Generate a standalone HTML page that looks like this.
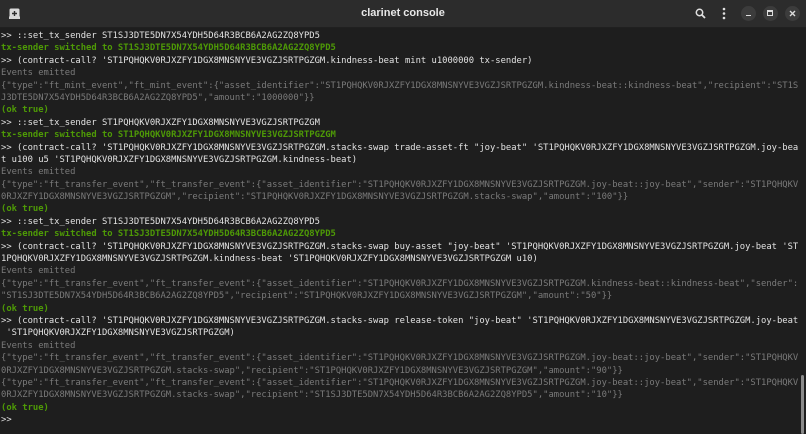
<!DOCTYPE html>
<html><head><meta charset="utf-8"><style>
html,body{margin:0;padding:0;width:806px;height:434px;overflow:hidden;background:#1e1e1e;}
.hdr{position:absolute;left:0;top:0;width:806px;height:27px;background:#2c2c2c;border-bottom:1px solid #202020;}
.title{position:absolute;left:0;width:806px;top:7px;text-align:center;color:#e8e8e8;font:bold 11px "Liberation Sans",sans-serif;}
.cb{position:absolute;top:6px;width:15px;height:15px;border-radius:50%;background:#3c3c3c;}
pre{position:absolute;left:1px;top:30px;margin:0;font-family:"DejaVu Sans Mono","Liberation Mono",monospace;font-size:8.84px;line-height:12.39px;color:#e2e2e2;white-space:pre;}
.g{color:#4e9a06;font-weight:bold;}
.m{color:#7a7a7a;}
.sb{position:absolute;left:801px;top:375px;width:3px;height:59px;background:#8a8a8a;border-radius:2px;}
</style></head><body>
<div class="hdr">
<svg style="position:absolute;left:9px;top:8px" width="11" height="11" viewBox="0 0 11 11"><rect x="0.5" y="0.5" width="10" height="10" rx="1.5" fill="#d8d8d8"/><path d="M5.5 3v5M3 5.5h5" stroke="#2c2c2c" stroke-width="1.4"/><rect x="0" y="8.5" width="11" height="2.5" fill="#d8d8d8"/></svg>
<div class="title">clarinet console</div>
<svg style="position:absolute;left:695px;top:8px" width="11" height="11" viewBox="0 0 11 11"><circle cx="4.5" cy="4.5" r="3.2" fill="none" stroke="#e0e0e0" stroke-width="1.5"/><path d="M7 7l3 3" stroke="#e0e0e0" stroke-width="1.8"/></svg>
<svg style="position:absolute;left:722px;top:7px" width="4" height="13"><circle cx="2" cy="2" r="1.3" fill="#e0e0e0"/><circle cx="2" cy="6.5" r="1.3" fill="#e0e0e0"/><circle cx="2" cy="11" r="1.3" fill="#e0e0e0"/></svg>
<div class="cb" style="left:741px"></div><div style="position:absolute;left:746px;top:15px;width:5px;height:1.3px;background:#ddd"></div>
<div class="cb" style="left:763px"></div><div style="position:absolute;left:767px;top:10px;border:1px solid #ddd;border-top-width:2px;box-sizing:content-box;width:4px;height:3px"></div>
<div class="cb" style="left:785px"></div><svg style="position:absolute;left:789px;top:10px" width="7" height="7"><path d="M1 1l5 5M6 1l-5 5" stroke="#ddd" stroke-width="1.4"/></svg>
</div>
<pre>&gt;&gt; ::set_tx_sender ST1SJ3DTE5DN7X54YDH5D64R3BCB6A2AG2ZQ8YPD5
<span class="g">tx-sender switched to ST1SJ3DTE5DN7X54YDH5D64R3BCB6A2AG2ZQ8YPD5</span>
&gt;&gt; (contract-call? 'ST1PQHQKV0RJXZFY1DGX8MNSNYVE3VGZJSRTPGZGM.kindness-beat mint u1000000 tx-sender)
<span class="m">Events emitted</span>
<span class="m">{"type":"ft_mint_event","ft_mint_event":{"asset_identifier":"ST1PQHQKV0RJXZFY1DGX8MNSNYVE3VGZJSRTPGZGM.kindness-beat::kindness-beat","recipient":"ST1S</span>
<span class="m">J3DTE5DN7X54YDH5D64R3BCB6A2AG2ZQ8YPD5","amount":"1000000"}}</span>
<span class="g">(ok true)</span>
&gt;&gt; ::set_tx_sender ST1PQHQKV0RJXZFY1DGX8MNSNYVE3VGZJSRTPGZGM
<span class="g">tx-sender switched to ST1PQHQKV0RJXZFY1DGX8MNSNYVE3VGZJSRTPGZGM</span>
&gt;&gt; (contract-call? 'ST1PQHQKV0RJXZFY1DGX8MNSNYVE3VGZJSRTPGZGM.stacks-swap trade-asset-ft "joy-beat" 'ST1PQHQKV0RJXZFY1DGX8MNSNYVE3VGZJSRTPGZGM.joy-bea
t u100 u5 'ST1PQHQKV0RJXZFY1DGX8MNSNYVE3VGZJSRTPGZGM.kindness-beat)
<span class="m">Events emitted</span>
<span class="m">{"type":"ft_transfer_event","ft_transfer_event":{"asset_identifier":"ST1PQHQKV0RJXZFY1DGX8MNSNYVE3VGZJSRTPGZGM.joy-beat::joy-beat","sender":"ST1PQHQKV</span>
<span class="m">0RJXZFY1DGX8MNSNYVE3VGZJSRTPGZGM","recipient":"ST1PQHQKV0RJXZFY1DGX8MNSNYVE3VGZJSRTPGZGM.stacks-swap","amount":"100"}}</span>
<span class="g">(ok true)</span>
&gt;&gt; ::set_tx_sender ST1SJ3DTE5DN7X54YDH5D64R3BCB6A2AG2ZQ8YPD5
<span class="g">tx-sender switched to ST1SJ3DTE5DN7X54YDH5D64R3BCB6A2AG2ZQ8YPD5</span>
&gt;&gt; (contract-call? 'ST1PQHQKV0RJXZFY1DGX8MNSNYVE3VGZJSRTPGZGM.stacks-swap buy-asset "joy-beat" 'ST1PQHQKV0RJXZFY1DGX8MNSNYVE3VGZJSRTPGZGM.joy-beat 'ST
1PQHQKV0RJXZFY1DGX8MNSNYVE3VGZJSRTPGZGM.kindness-beat 'ST1PQHQKV0RJXZFY1DGX8MNSNYVE3VGZJSRTPGZGM u10)
<span class="m">Events emitted</span>
<span class="m">{"type":"ft_transfer_event","ft_transfer_event":{"asset_identifier":"ST1PQHQKV0RJXZFY1DGX8MNSNYVE3VGZJSRTPGZGM.kindness-beat::kindness-beat","sender":</span>
<span class="m">"ST1SJ3DTE5DN7X54YDH5D64R3BCB6A2AG2ZQ8YPD5","recipient":"ST1PQHQKV0RJXZFY1DGX8MNSNYVE3VGZJSRTPGZGM","amount":"50"}}</span>
<span class="g">(ok true)</span>
&gt;&gt; (contract-call? 'ST1PQHQKV0RJXZFY1DGX8MNSNYVE3VGZJSRTPGZGM.stacks-swap release-token "joy-beat" 'ST1PQHQKV0RJXZFY1DGX8MNSNYVE3VGZJSRTPGZGM.joy-beat
 'ST1PQHQKV0RJXZFY1DGX8MNSNYVE3VGZJSRTPGZGM)
<span class="m">Events emitted</span>
<span class="m">{"type":"ft_transfer_event","ft_transfer_event":{"asset_identifier":"ST1PQHQKV0RJXZFY1DGX8MNSNYVE3VGZJSRTPGZGM.joy-beat::joy-beat","sender":"ST1PQHQKV</span>
<span class="m">0RJXZFY1DGX8MNSNYVE3VGZJSRTPGZGM.stacks-swap","recipient":"ST1PQHQKV0RJXZFY1DGX8MNSNYVE3VGZJSRTPGZGM","amount":"90"}}</span>
<span class="m">{"type":"ft_transfer_event","ft_transfer_event":{"asset_identifier":"ST1PQHQKV0RJXZFY1DGX8MNSNYVE3VGZJSRTPGZGM.joy-beat::joy-beat","sender":"ST1PQHQKV</span>
<span class="m">0RJXZFY1DGX8MNSNYVE3VGZJSRTPGZGM.stacks-swap","recipient":"ST1SJ3DTE5DN7X54YDH5D64R3BCB6A2AG2ZQ8YPD5","amount":"10"}}</span>
<span class="g">(ok true)</span>
&gt;&gt;</pre>
<div class="sb"></div>
</body></html>
